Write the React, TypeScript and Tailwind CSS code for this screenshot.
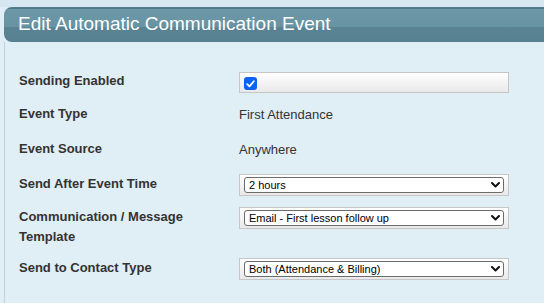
const fieldBox =
  'w-[270px] border border-[#c6c6c6] bg-[linear-gradient(to_bottom,#ffffff,#e9e9e9)]';

const Chevron = () => (
  <svg width="9" height="6" viewBox="0 0 9 6" className="shrink-0">
    <path d="M1 1 L4.5 4.5 L8 1" fill="none" stroke="#111" strokeWidth="2" strokeLinecap="round" strokeLinejoin="round" />
  </svg>
);

const SelectField = ({ value }: { value: string }) => (
  <div className={`${fieldBox} h-[22px] px-[4px] pt-[2px]`}>
    <div className="h-[16px] border border-[#6c6c6c] rounded-[3px] bg-white pl-[4px] pr-[3px] flex items-center justify-between text-[11px] leading-[14px] text-black">
      <span>{value}</span>
      <Chevron />
    </div>
  </div>
);

const Label = ({ children }: { children: React.ReactNode }) => (
  <div className="w-[220px] shrink-0 pr-[10px] text-[13px] leading-[20px] font-bold text-[#333]">{children}</div>
);

export default function App() {
  return (
    <div className="w-[544px] h-[303px] overflow-hidden bg-[#e0eef6] font-['Liberation_Sans',Arial,sans-serif]">
      <div className="h-[7px] bg-[#d6e7f1]" />
      <div className="pl-[4px]">
        <div className="h-[35px] rounded-l-[8px] pl-[14px] pt-[6px] text-[19px] leading-[21px] text-white bg-[linear-gradient(to_bottom,#52798a_0px,#52798a_2px,#6b98a7_2px,#6893a2_57%,#5a8494_57%,#56808f_100%)]">
          Edit Automatic Communication Event
        </div>
        <div className="h-[261px] border-l border-[#bdd3df] pl-[14px] pt-[30px] flex flex-col gap-[11px]">
          {/* Sending Enabled */}
          <div className="flex items-start">
            <div className="-mt-[1px]">
              <Label>Sending Enabled</Label>
            </div>
            <div className={`${fieldBox} h-[21px] pl-[4px] pt-[4px]`}>
              <div className="w-[13px] h-[13px] rounded-[3px] bg-[#0b63f6] flex items-center justify-center">
                <svg width="9" height="8" viewBox="0 0 9 8">
                  <path d="M1.2 4.2 L3.5 6.4 L7.8 1.2" fill="none" stroke="#fff" strokeWidth="1.8" strokeLinecap="round" strokeLinejoin="round" />
                </svg>
              </div>
            </div>
          </div>

          <div className="flex items-start h-[24px]">
            <Label>Event Type</Label>
            <div className="text-[13px] leading-[22px] text-[#333]">First Attendance</div>
          </div>

          <div className="flex items-start h-[24px]">
            <Label>Event Source</Label>
            <div className="text-[13px] leading-[22px] text-[#333]">Anywhere</div>
          </div>

          <div className="flex items-start">
            <Label>Send After Event Time</Label>
            <SelectField value="2 hours" />
          </div>

          <div className="flex items-start">
            <Label>Communication / Message Template</Label>
            <SelectField value="Email - First lesson follow up" />
          </div>

          <div className="flex items-start">
            <Label>Send to Contact Type</Label>
            <SelectField value="Both (Attendance & Billing)" />
          </div>
        </div>
      </div>
    </div>
  );
}
